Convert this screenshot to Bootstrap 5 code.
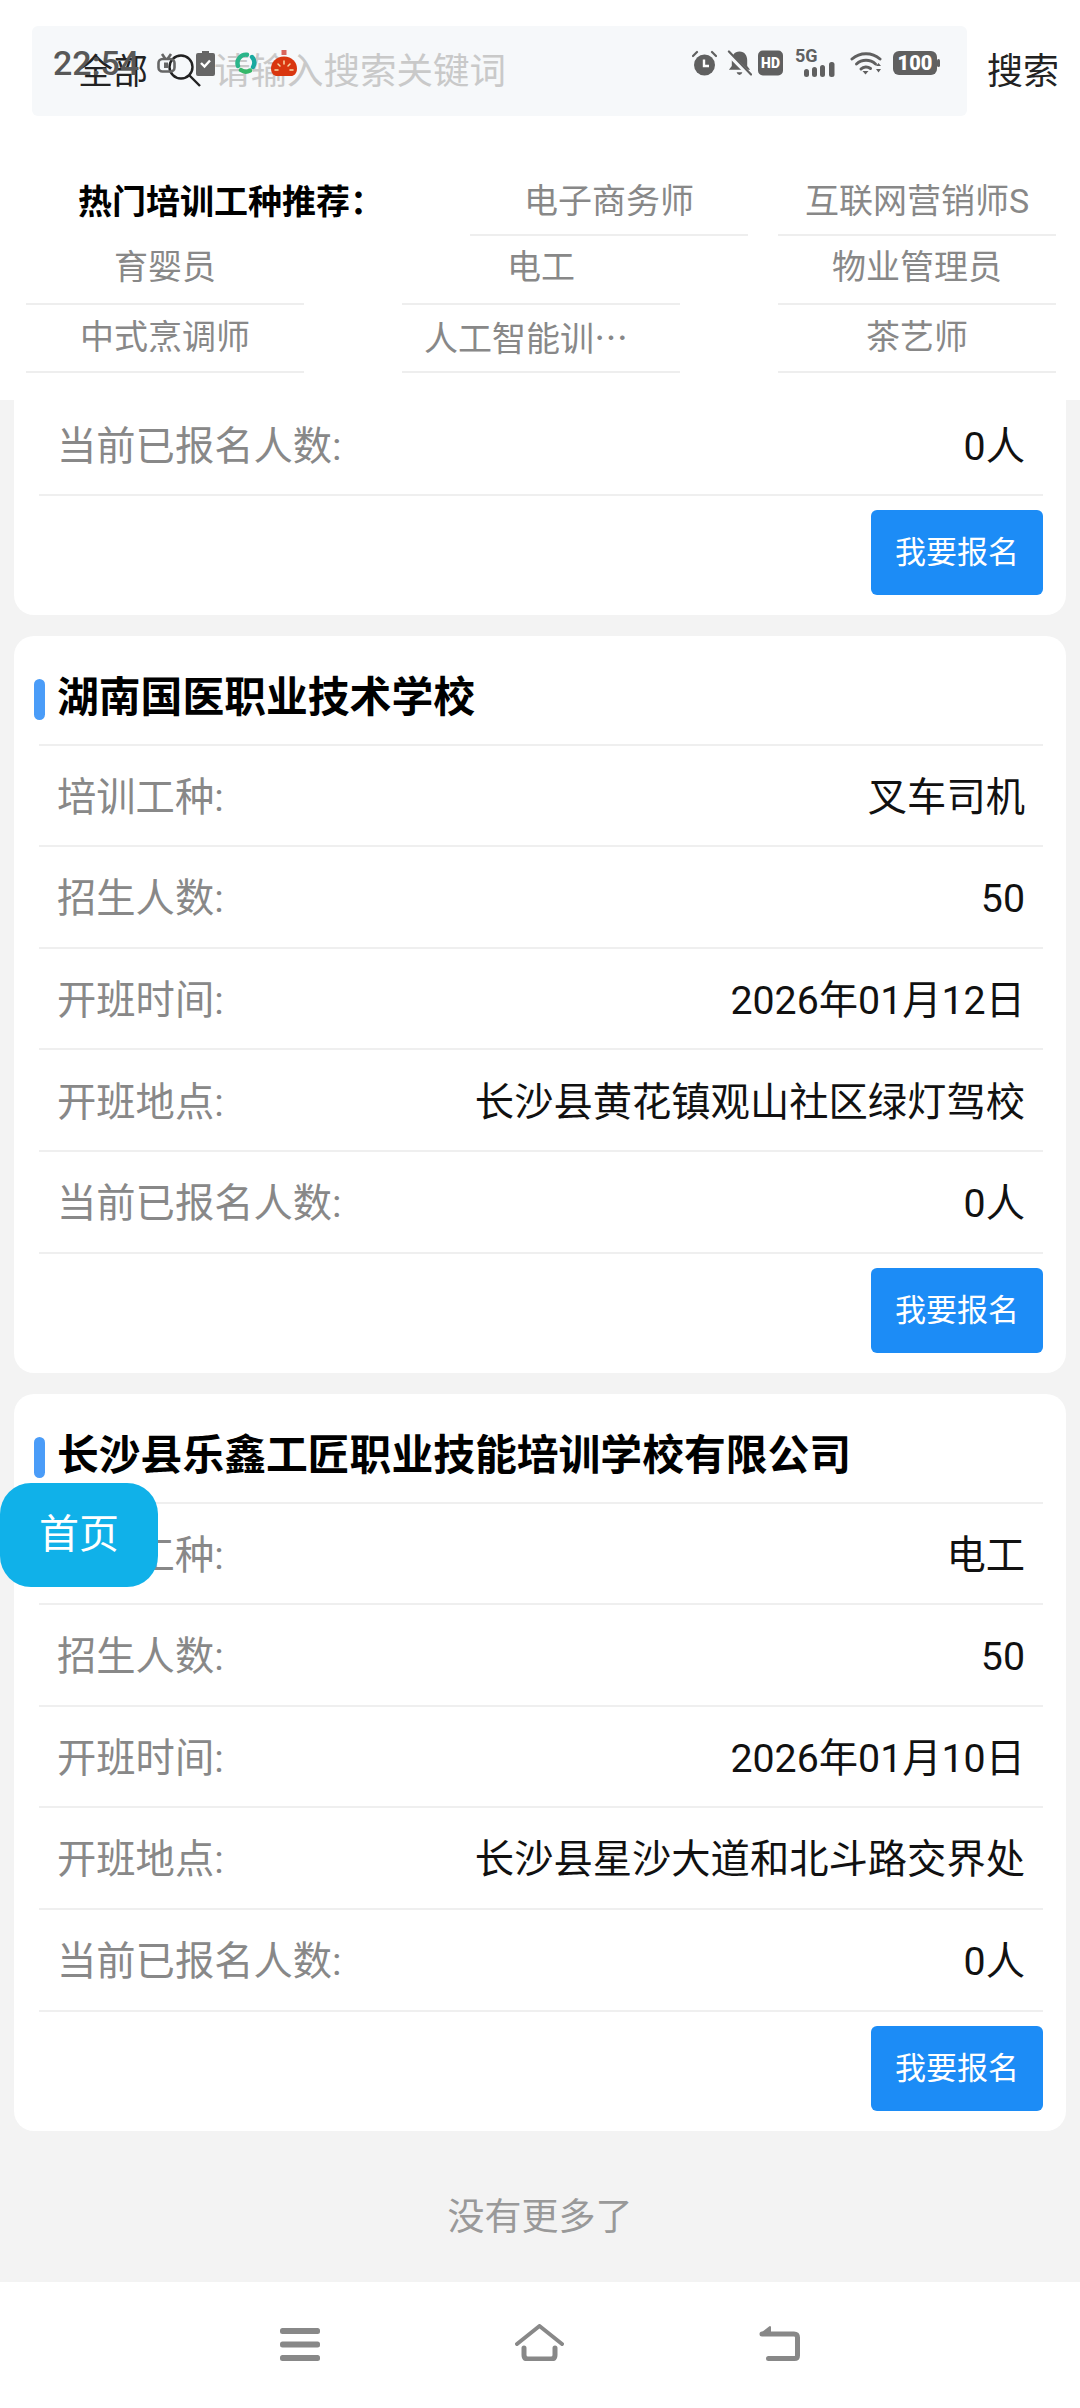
<!DOCTYPE html>
<html lang="zh-CN">
<head>
<meta charset="utf-8">
<title>培训报名</title>
<link href="https://cdn.jsdelivr.net/npm/bootstrap@5.3.0/dist/css/bootstrap.min.css" rel="stylesheet">
<style>
html,body{height:2408px;overflow:hidden}
body{font-family:Roboto,"Noto Sans CJK SC",sans-serif;background:#f3f3f3;color:#111;width:1080px;position:relative}
.page-top{height:400px;background:#fff;padding-top:26px}
.search-row{height:90px;padding:0 21px 0 32px}
.search-box{width:935px;height:90px;background:#f6f8fa;border-radius:6px;padding-left:46px}
.search-all{font-size:35px;color:#222;line-height:1;width:90px;padding-top:2px}
.search-ph{font-size:36.5px;color:#c9c9c9;margin-left:12px;line-height:1;padding-top:2px}
.search-go{font-size:36px;color:#222;line-height:1;padding-top:2px}
.hot-wrap{margin-top:51.5px;padding:0 24px 0 26px}
.hot-line{height:68.5px}
.hot-title{flex:1;font-size:34px;font-weight:700;color:#000;padding-left:52px;line-height:1;height:100%;display:flex;align-items:center;padding-top:1px}
.hot-item{width:278px;height:100%;font-size:34px;color:#888;border-bottom:2px solid #eee;line-height:1;padding:0 22px 4px}
.hot-first{padding:1px 22px 0}
.hot-low{padding-bottom:1px}
.hot-cjk{font-family:"Noto Sans CJK SC",sans-serif}
.hot-gap{margin-left:30px}
.feed{height:1882px;overflow:hidden;padding:0 14px}
.job-card{border:0;border-radius:20px;background:#fff;padding:0 23px 20px 25px;margin-bottom:21px;width:1052px}
.job-card.cut{border-radius:0 0 20px 20px}
.job-head{height:110px;font-size:41.8px;font-weight:700;color:#000;border-bottom:2px solid #efefef;padding-left:18px;position:relative;line-height:1;padding-top:17px}
.job-head::before{content:"";position:absolute;left:-5px;top:43px;width:11px;height:41px;border-radius:6px;background:#4a9cf8}
.info-line{height:101.6px;border-bottom:2px solid #efefef;padding:6px 18px 0;font-size:39.3px;line-height:1}
.info-short{height:95.6px;padding:1px 18px 0}
.info-key{color:#888}
.info-val{color:#111}
.foot-act{padding-top:14px}
.join-btn{width:172px;height:85px;background:#1c8cf6;border:0;border-radius:6px;color:#fff;font-size:31px;line-height:1;padding:0}
.join-btn:hover{background:#1c8cf6;color:#fff}
.no-more{color:#999;font-size:37px;line-height:1;text-align:center;padding-top:47px}
.home-fab{position:absolute;left:0;top:1483px;width:158px;height:104px;background:#10b1e9;border-radius:31px;color:#fff;font-size:40px;line-height:1}
.sys-nav{height:126px;background:#fff;gap:195px;padding-bottom:47px}
.status-layer{position:absolute;left:53px;top:47px;width:887px;height:32px;pointer-events:none}
.status-time{font-size:34px;font-weight:500;color:#585858;line-height:1;width:104px}
.st-a{margin-left:20px}.st-b{margin-left:19px}.st-c{margin-left:14px}
.st-bell{margin-left:10px}.st-hd{margin-left:6px}.st-sig{margin-left:12px}.st-wf{margin-left:12px}.st-bt{margin-left:10px}
</style>
</head>
<body>
<header class="page-top">
  <div class="search-row d-flex align-items-center justify-content-between">
    <div class="search-box d-flex align-items-center">
      <span class="search-all">全部</span>
      <svg width="34" height="34" viewBox="0 0 34 34" fill="none" stroke="#222" stroke-width="2.4"><circle cx="13" cy="13" r="11.5"/><line x1="21" y1="21" x2="32" y2="32"/></svg>
      <span class="search-ph">请输入搜索关键词</span>
    </div>
    <span class="search-go">搜索</span>
  </div>
  <div class="hot-wrap">
    <div class="hot-line d-flex align-items-center">
      <div class="hot-title">热门培训工种推荐：</div>
      <div class="hot-item hot-first d-flex align-items-center justify-content-center">电子商务师</div>
      <div class="hot-item hot-first hot-gap d-flex align-items-center justify-content-center text-nowrap">互联网营销师S</div>
    </div>
    <div class="hot-line d-flex justify-content-between">
      <div class="hot-item d-flex align-items-center justify-content-center">育婴员</div>
      <div class="hot-item d-flex align-items-center justify-content-center">电工</div>
      <div class="hot-item d-flex align-items-center justify-content-center">物业管理员</div>
    </div>
    <div class="hot-line d-flex justify-content-between">
      <div class="hot-item hot-low d-flex align-items-center justify-content-center">中式烹调师</div>
      <div class="hot-item hot-low hot-cjk d-flex align-items-center justify-content-start">人工智能训…</div>
      <div class="hot-item hot-low d-flex align-items-center justify-content-center">茶艺师</div>
    </div>
  </div>
</header>

<main class="feed">
  <section class="card job-card cut">
    <div class="info-line info-short d-flex align-items-center justify-content-between"><span class="info-key">当前已报名人数:</span><span class="info-val">0人</span></div>
    <div class="foot-act d-flex justify-content-end"><button type="button" class="btn join-btn">我要报名</button></div>
  </section>

  <section class="card job-card">
    <div class="job-head d-flex align-items-center">湖南国医职业技术学校</div>
    <div class="info-line d-flex align-items-center justify-content-between"><span class="info-key">培训工种:</span><span class="info-val">叉车司机</span></div>
    <div class="info-line d-flex align-items-center justify-content-between"><span class="info-key">招生人数:</span><span class="info-val">50</span></div>
    <div class="info-line d-flex align-items-center justify-content-between"><span class="info-key">开班时间:</span><span class="info-val">2026年01月12日</span></div>
    <div class="info-line d-flex align-items-center justify-content-between"><span class="info-key">开班地点:</span><span class="info-val">长沙县黄花镇观山社区绿灯驾校</span></div>
    <div class="info-line d-flex align-items-center justify-content-between"><span class="info-key">当前已报名人数:</span><span class="info-val">0人</span></div>
    <div class="foot-act d-flex justify-content-end"><button type="button" class="btn join-btn">我要报名</button></div>
  </section>

  <section class="card job-card">
    <div class="job-head d-flex align-items-center">长沙县乐鑫工匠职业技能培训学校有限公司</div>
    <div class="info-line d-flex align-items-center justify-content-between"><span class="info-key">培训工种:</span><span class="info-val">电工</span></div>
    <div class="info-line d-flex align-items-center justify-content-between"><span class="info-key">招生人数:</span><span class="info-val">50</span></div>
    <div class="info-line d-flex align-items-center justify-content-between"><span class="info-key">开班时间:</span><span class="info-val">2026年01月10日</span></div>
    <div class="info-line d-flex align-items-center justify-content-between"><span class="info-key">开班地点:</span><span class="info-val">长沙县星沙大道和北斗路交界处</span></div>
    <div class="info-line d-flex align-items-center justify-content-between"><span class="info-key">当前已报名人数:</span><span class="info-val">0人</span></div>
    <div class="foot-act d-flex justify-content-end"><button type="button" class="btn join-btn">我要报名</button></div>
  </section>

  <div class="no-more">没有更多了</div>
</main>

<nav class="sys-nav d-flex align-items-end justify-content-center">
  <svg width="40" height="33" viewBox="0 0 40 33" fill="#888"><rect y="0" width="40" height="6" rx="2.5"/><rect y="13.5" width="40" height="6" rx="2.5"/><rect y="27" width="40" height="6" rx="2.5"/></svg>
  <svg width="49" height="37" viewBox="0 0 49 37" fill="none" stroke="#888" stroke-linecap="round" stroke-linejoin="round"><path d="M2 20 24.5 2 47 20" stroke-width="4"/><path d="M9 24v7q0 4 4 4h23q4 0 4-4v-7" stroke-width="5"/></svg>
  <svg width="41" height="36" viewBox="0 0 41 36" fill="none" stroke="#888" stroke-linecap="round" stroke-linejoin="round"><path d="M3 9h32q3.500 0 3.500 3.500v18q0 3-3 3h-26" stroke-width="5"/><path d="M2 9 11 2v8z" fill="#888" stroke-width="2"/></svg>
</nav>

<div class="home-fab d-flex align-items-center justify-content-center">首页</div>

<div class="status-layer d-flex align-items-center justify-content-between">
  <div class="d-flex align-items-center">
    <span class="status-time">22:54</span>
    <svg width="19" height="20" viewBox="0 0 19 20" fill="none" stroke="#666" stroke-width="2.600"><rect x="1.500" y="6" width="16" height="12.500" rx="4"/><path d="M5 1l3.500 5M14 1l-3.500 5"/><rect x="7" y="9.500" width="4" height="5.500" fill="#666" stroke="none"/></svg>
    <svg class="st-a" width="19" height="26" viewBox="0 0 19 26"><path d="M2 3h4V1h7v2h4q2 0 2 2v19q0 2-2 2H2q-2 0-2-2V5q0-2 2-2z" fill="#666"/><path d="M5 13l3.500 3.500L14 10.500" fill="none" stroke="#fff" stroke-width="2.400"/></svg>
    <svg class="st-b" width="23" height="22" viewBox="0 0 23 22" fill="none" stroke-width="4.400" stroke-linecap="round"><path d="M4 14A8.500 8.500 0 0 1 13 2.700" stroke="#2ab58a"/><path d="M18 5a8.500 8.500 0 0 1 1 10" stroke="#18a9a0"/><path d="M16 18.500A8.500 8.500 0 0 1 7 18" stroke="#35b86a"/></svg>
    <svg class="st-c" width="26" height="26" viewBox="0 0 26 26"><rect x="10.500" y="0" width="5" height="5" fill="#d9655c"/><path d="M13 6.500c8 0 13 6 13 12 0 5-3 7.500-6 7.500H6c-3 0-6-2.500-6-7.500 0-6 5-12 13-12z" fill="#d9360f"/><path d="M13 11v3M7 14l2 2M19 14l-2 2M4 20h3M19 20h3" stroke="#f7d9a8" stroke-width="1.500" stroke-linecap="round"/></svg>
  </div>
  <div class="d-flex align-items-center">
    <svg width="25" height="26" viewBox="0 0 25 26" fill="#606060"><circle cx="12.500" cy="15" r="10.500"/><path d="M1 6l4-4M24 6l-4-4" stroke="#606060" stroke-width="2.200" stroke-linecap="round"/><path d="M12 9.500v6.500h5" fill="none" stroke="#fff" stroke-width="2.400"/></svg>
    <svg class="st-bell" width="25" height="26" viewBox="0 0 26 26" fill="#606060"><path d="M13 1c5.500 0 8 4.500 8 9v6l3 4H2l3-4v-6c0-4.500 2.500-9 8-9z"/><path d="M10 22.500h6q-1 3-3 3t-3-3z"/><path d="M1 3l22 22" stroke="#f6f8fa" stroke-width="5"/><path d="M2 1l23 24" stroke="#606060" stroke-width="2.300" stroke-linecap="round"/></svg>
    <svg class="st-hd" width="25" height="26" viewBox="0 0 26 26"><rect width="26" height="26" rx="5" fill="#606060"/><text x="13" y="18.500" font-family="Roboto,sans-serif" font-size="14.500" font-weight="900" fill="#fff" text-anchor="middle">HD</text></svg>
    <svg class="st-sig" width="43" height="30" viewBox="0 0 43 30" fill="#606060"><text x="0" y="13.500" font-family="Roboto,sans-serif" font-size="18" font-weight="700" fill="#606060">5G</text><rect x="9" y="21" width="5" height="8" rx="2.500"/><rect x="17" y="19" width="5" height="10" rx="2.500"/><rect x="25" y="17" width="5" height="12" rx="2.500"/><rect x="34" y="14" width="5.500" height="15" rx="2.500"/></svg>
    <svg class="st-wf" width="33" height="24" viewBox="0 0 33 24" fill="none" stroke="#606060" stroke-width="3" stroke-linecap="round"><path d="M2 8a21 21 0 0 1 28 0"/><path d="M6.500 13a14 14 0 0 1 19 0"/><path d="M11 18a7 7 0 0 1 9.500-.5"/><path d="M12.500 20h6l-3 3.500z" fill="#606060" stroke="none"/><path d="M26 15h5l-2.500-3zM26 18h5l-2.500 3.500z" fill="#606060" stroke="none"/></svg>
    <svg class="st-bt" width="47" height="24" viewBox="0 0 47 24"><rect width="44" height="24" rx="6" fill="#606060"/><rect x="44" y="8" width="3" height="8" rx="1.500" fill="#606060"/><text x="22" y="19" font-family="Roboto,sans-serif" font-size="20" font-weight="900" fill="#fff" text-anchor="middle">100</text></svg>
  </div>
</div>
</body>
</html>
